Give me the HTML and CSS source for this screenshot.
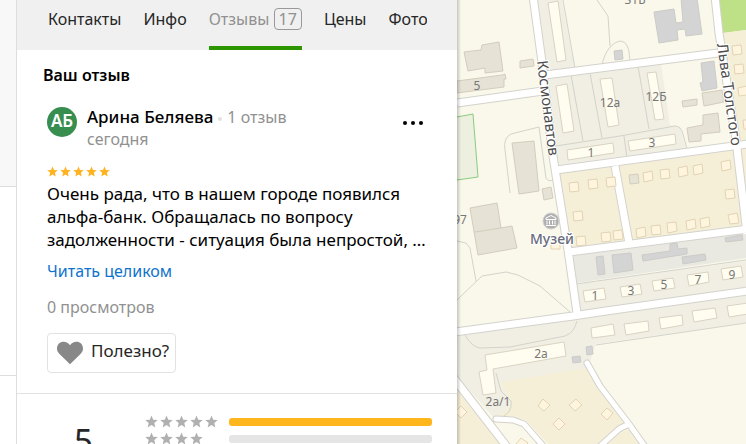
FILE: index.html
```
<!DOCTYPE html>
<html lang="ru">
<head>
  <meta charset="UTF-8">
  <meta name="viewport" content="width=device-width, initial-scale=1.0">
  <title>Отзывы</title>
  <link rel="stylesheet" href="styles.css">
</head>
<body>
  <svg class="defs" aria-hidden="true">
    <symbol id="star" viewBox="0 0 14 14">
      <path d="M7 .6 8.9 5.1 13.7 5.5 10 8.7 11.1 13.4 7 10.9 2.9 13.4 4 8.7 .3 5.5 5.1 5.1Z"/>
    </symbol>
  </svg>
  <div class="page">
    <!-- edge of the search results behind the card -->
    <div class="results">
      <div class="result resultFirst"></div>
      <div class="result resultSecond"></div>
    </div>

    <main class="card">
      <nav class="tabs">
        <a class="tab" href="#">Контакты</a>
        <a class="tab" href="#">Инфо</a>
        <a class="tab active" href="#">Отзывы <span class="count">17</span></a>
        <a class="tab" href="#">Цены</a>
        <a class="tab" href="#">Фото</a>
      </nav>

      <section class="review">
        <h2 class="title">Ваш отзыв</h2>
        <div class="content">
          <div class="author">
            <div class="avatar">АБ</div>
            <div class="who">
              <div><span class="name">Арина Беляева</span><span class="dot"></span><span class="muted">1 отзыв</span></div>
              <div class="muted">сегодня</div>
            </div>
            <button class="more" aria-label="Ещё">
              <svg width="20" height="4"><circle cx="2" cy="2" r="2"/><circle cx="10" cy="2" r="2"/><circle cx="18" cy="2" r="2"/></svg>
            </button>
          </div>
          <div class="rating">
            <svg><use href="#star"/></svg><svg><use href="#star"/></svg><svg><use href="#star"/></svg><svg><use href="#star"/></svg><svg><use href="#star"/></svg>
          </div>
          <p class="text">Очень рада, что в нашем городе появился<br>альфа-банк. Обращалась по вопросу<br>задолженности - ситуация была непростой, …</p>
          <a class="readMore" href="#">Читать целиком</a>
          <div class="views">0 просмотров</div>
          <button class="useful">
            <svg width="26" height="24" viewBox="0 0 26 24"><path d="M13 23.3 3 13.6C.4 11 0 9.300 0 7.300 0 3.400 3 .7 6.600.7 9.200.7 11.500 1.900 13 4.200 14.500 1.900 16.800.7 19.400.7 23 .7 26 3.400 26 7.300 26 9.300 25.600 11 23 13.600Z"/></svg>
            Полезно?
          </button>
        </div>
      </section>

      <section class="summary">
        <div class="score">5</div>
        <div class="bars">
          <div class="barRow">
            <div class="stars"><svg><use href="#star"/></svg><svg><use href="#star"/></svg><svg><use href="#star"/></svg><svg><use href="#star"/></svg><svg><use href="#star"/></svg></div>
            <div class="bar"><div class="fill" style="width: 100%"></div></div>
          </div>
          <div class="barRow">
            <div class="stars"><svg><use href="#star"/></svg><svg><use href="#star"/></svg><svg><use href="#star"/></svg><svg><use href="#star"/></svg></div>
            <div class="bar"></div>
          </div>
        </div>
      </section>
    </main>

    <div class="map">
      <svg viewBox="457 0 289 444" preserveAspectRatio="xMinYMin slice">
        <!-- blocks -->
        <g class="block">
          <path d="M537 0H562L575 69 545 73Z M547 79 606 71 661 64 669 124 672 149 558 165Z M661 64 670 125 680 127 686 148 558 165Z"/>
          <path d="M575 284 746 261V287L577 312Z M457 335 573 320 746 295V323L596 344 588 368 500 383 507 394 511 404 509 411 496 420 457 376Z"/>
        </g>
        <path class="industrial" d="M570 255 746 232V258L576 283Z"/>
        <path class="park" d="M715 0H746V30L723 33Z"/>
        <path class="yard" d="M457 117 473 114 478 177 457 180Z"/>
        <g class="gardens">
          <path d="M559 173 611 167 625 242 569 249Z M619 166 735 150 745 226 631 241Z M723 33 746 30V142L738 143Z M741 149H746V190Z"/>
          <path d="M500 382 586 368 600 389 627 424 613 432 598 444H548L526 420 511 416 497 416 511 406 507 394Z M457 387 502 444H457Z M632 428 643 444H608L620 433Z"/>
        </g>
        <!-- paths -->
        <g class="path">
          <path d="M563 0 575 68M571 75 583 141M590 73 602 138M597 0 608 16 610 46M602 65C605 51 612 42 621 41 630 43 629 55 630 61M638 66 649 129M556 146 620 136 675 126Q681 126 683 134L687 149M624 136 627 158"/>
          <path d="M505 150Q503 138 511 134L539 127 546 178Q548 182 554 180M505 150 510 193M457 241 466 243 470 248 476 281M457 300 482 276 506 272 518 275 540 286 570 312M465 335Q472 347 480 348L510 347 565 336Q574 333 577 321M596 345 746 323M496 373 501 391 511 401Q513 413 500 418"/>
          <path d="M576 284 746 260"/>
        </g>
        <path class="fence" d="M457 117 473 114 478 177 457 180"/>
        <!-- roads, casing first and then the surface -->
        <g class="casing">
          <path d="M533-4 542 62 552 150 568 250 577 313M457 103 543 91M545 75 718 53M715-4 719 33 736 140 747 234M556 170 748 144M569 252 748 229M615 166 629 243M455 332 573 316 606 311 748 291M453 377 508 448"/>
          <path class="lane" d="M496 419 513 420 524 424 545 448M587 363 600 386 629 424 646 448M629 424 619 429 598 448"/>
        </g>
        <g class="road">
          <path d="M533-4 542 62 552 150 568 250 577 313M457 103 543 91M545 75 718 53M715-4 719 33 736 140 747 234M556 170 748 144M569 252 748 229M615 166 629 243M455 332 573 316 606 311 748 291M453 377 508 448"/>
          <path class="lane" d="M496 419 513 420 524 424 545 448M587 363 600 386 629 424 646 448M629 424 619 429 598 448"/>
        </g>
        <!-- buildings -->
        <g class="building">
          <path d="M464 52 481 50 482 45 499 42 503 71 485 73 485 68 468 71Z M457 81 502 75 505 74 506 79 504 79 504 87 457 93Z M520 61 533 59 534 66 520 68Z"/>
          <path d="M512 143 534 141 539 191 519 194Z M542 189 551 187 553 198 544 200Z M470 208 497 203 501 228 512 226 517 248 478 255Z M475 232 501 228"/>
          <path d="M682 101 697 99V105L683 107Z M702 93 722 90 724 102 704 106Z M687 128 703 125 703 115 718 113 720 132 701 134 701 141 689 142Z M629 175 638 174 639 183 630 184Z"/>
        </g>
        <g class="grayBuilding">
          <path d="M654 12 674 9 676 23 683 22 681-2 697-2 702 34 686 36 685 29 677 30 678 40 659 43Z M701 63 714 61 717 88 702 91 700 83 703 82Z M614 51 622 50 623 59 615 60Z"/>
          <path d="M596 257 603 256 605 274 598 275Z M612 255 631 253 633 270 614 273Z M642 255 670 251 670 244 677 243 678 249 687 248 687 254 643 261Z M682 257 705 254 706 260 683 264Z M725 238 742 235 743 240 726 242Z"/>
          <path d="M572 357 580 356 581 362 573 363Z M586 347 592 346 593 354 587 355Z"/>
        </g>
        <g class="house">
          <path d="M548 3 558 1 566 60 557 62Z M556 86 567 84 574 131 563 133Z M600 79 612 78 619 125 608 127Z M647 73 656 72 664 119 655 120Z"/>
          <path d="M567 150 613 143 614 153 568 160Z M628 141 675 134 676 144 630 151Z"/>
          <path d="M583 291 604 288 606 299 585 302Z M620 287 640 284 642 294 622 297Z M652 281 673 278 675 288 654 291Z M687 275 708 272 709 282 689 286Z M721 269 741 266 743 277 723 280Z"/>
          <path d="M591 328 613 324 615 335 592 338Z M624 324 648 321 649 331 626 335Z M659 318 682 315 683 325 661 329Z M692 311 715 308 717 318 694 322Z M727 306 748 303V314L729 317Z"/>
          <path d="M485 355 564 342 566 356 493 369 496 393 483 395 479 372 487 370Z"/>
        </g>
        <g class="cottage">
          <path d="M569 183 578 182 579 191 570 192Z M588 180 597 179 598 188 589 189Z M606 178 615 177 616 186 607 187Z M573 212 582 211 583 220 574 221Z M576 237 585 236 586 245 577 246Z M601 233 610 232 611 241 602 242Z M613 231 622 230 623 239 614 240Z M551 240 560 239 560 249 551 249Z"/>
          <path d="M643 173 652 171 653 180 644 182Z M660 170 669 169 670 178 661 179Z M678 168 687 166 688 175 679 177Z M693 166 702 164 703 173 694 175Z M721 162 730 160 731 169 722 171Z M725 190 734 189 735 198 726 199Z M728 215 737 213 739 223 730 224Z"/>
          <path d="M636 229 645 227 646 236 637 238Z M651 226 660 225 661 234 652 235Z M667 223 676 222 677 231 668 233Z M686 221 695 219 696 228 687 230Z M700 219 709 217 710 226 701 228Z"/>
          <path d="M732 46 741 45 742 54 733 55Z M734 65 743 64 744 73 735 74Z M738 88 747 86V95L739 96Z M743 120H748V129H744Z"/>
          <path d="M543 399 550 405 544 411 538 406Z M576 399 582 405 575 411 569 405Z M559 418 565 424 559 430 553 424Z M607 408 613 413 607 420 601 414Z M461 406 467 412 461 418 455 412Z M521 438 528 443 522 449 516 444Z"/>
        </g>
        <!-- museum pin -->
        <circle class="pin" cx="551" cy="221" r="8"/>
        <path class="pinIcon" d="M546 219.500V218L551 215.500 556 218V219.500ZM547 220.500V224.500M549.500 220.500V224.500M552.500 220.500V224.500M555 220.500V224.500M546 225.500H556"/>
        <!-- labels -->
        <g class="number">
          <text x="477" y="90">5</text>
          <text x="635" y="4">31Б</text>
          <text x="610" y="107">12а</text>
          <text x="656" y="101">12Б</text>
          <text x="591" y="157">1</text>
          <text x="652" y="147">3</text>
          <text x="460" y="224">97</text>
          <text x="595" y="300">1</text>
          <text x="631" y="295">3</text>
          <text x="664" y="289">5</text>
          <text x="698" y="284">7</text>
          <text x="732" y="279">9</text>
          <text x="541" y="358">2а</text>
          <text x="498" y="406">2а/1</text>
        </g>
        <text class="place" x="552" y="244">Музей</text>
        <text class="street" transform="translate(537 61) rotate(83)">Космонавтов</text>
        <text class="street" transform="translate(717 44) rotate(82)">Льва Толстого</text>
      </svg>
    </div>
  </div>
</body>
</html>
```
FILE: styles.css
```
*{
  box-sizing: border-box;
}
body{
  margin: 0;
  font-family: "Noto Sans", sans-serif;
  font-size: 16px;
  line-height: 22px;
  color: #000;
}
a{
  text-decoration: none;
}
button{
  font: inherit;
  background: none;
  border: none;
  padding: 0;
}
.defs{
  display: none;
}
.page{
  display: flex;
  height: 100vh;
  overflow: hidden;
}

/* results */
.results{
  width: 17px;
  flex: none;
  border-right: 1px solid #dedede;
}
.result{
  border-bottom: 1px solid #dedede;
}
.resultFirst{
  height: 187px;
  background-color: #f8f8f8;
}
.resultSecond{
  height: 189px;
}

/* card */
.card{
  width: 440px;
  flex: none;
}
.tabs{
  display: flex;
  gap: 22px;
  height: 50px;
  padding-left: 31px;
  border-right: 30px solid #f0f0f0;
  background-color: #f0f0f0;
  overflow: hidden;
}
.tab{
  flex: none;
  padding-top: 8px;
  color: #262626;
}
.active{
  color: #919191;
  border-bottom: 4px solid #2b9600;
}
.count{
  display: inline-block;
  line-height: 20px;
  padding: 0 4px;
  border: 1px solid #999;
  border-radius: 4px;
}
.review{
  padding: 14px 30px 20px 26px;
  border-bottom: 1px solid #e2e2e2;
}
.title{
  margin: 0;
  font-size: 16px;
  font-weight: 600;
}
.content{
  padding: 20px 4px 0;
}
.author{
  display: flex;
  gap: 10px;
}
.avatar{
  width: 30px;
  height: 30px;
  margin-top: 1px;
  border-radius: 50%;
  background-color: #388e4f;
  color: #fff;
  font-size: 17px;
  font-weight: 600;
  line-height: 28px;
  text-align: center;
}
.who{
  flex: 1;
}
.name{
  font-size: 17px;
  font-weight: 500;
}
.dot{
  display: inline-block;
  width: 4px;
  height: 4px;
  margin: 0 5px;
  border-radius: 50%;
  background-color: #e2e2e2;
  vertical-align: middle;
}
.muted{
  color: #919191;
}
.more{
  display: flex;
  align-items: center;
  height: 34px;
}
.rating{
  display: flex;
  gap: 2px;
  padding: 16px 0 5px;
}
.rating svg{
  width: 11px;
  height: 11px;
  fill: #ffb31f;
}
.text{
  margin: 0;
  font-size: 17px;
  line-height: 23px;
  white-space: nowrap;
}
.readMore{
  display: block;
  margin-top: 9px;
  color: #0f73cc;
}
.views{
  margin-top: 14px;
  color: #919191;
}
.useful{
  display: flex;
  align-items: center;
  gap: 8px;
  height: 40px;
  margin-top: 15px;
  padding: 0 6px 4px 9px;
  border: 1px solid #e2e2e2;
  border-radius: 4px;
  font-size: 17px;
  color: #262626;
}
.useful svg{
  margin-top: 4px;
  fill: #888;
}
.summary{
  display: flex;
  padding: 19px 25px 0 57px;
}
.score{
  width: 71px;
  padding-top: 10px;
  font-size: 33px;
  line-height: 36px;
  color: #262626;
}
.bars{
  flex: 1;
}
.barRow{
  display: flex;
  align-items: center;
  height: 17px;
}
.stars{
  display: flex;
  gap: 2px;
  width: 84px;
}
.stars svg{
  width: 13px;
  height: 13px;
  fill: #b0b0b0;
}
.bar{
  flex: 1;
  height: 8px;
  border-radius: 3px;
  background-color: #e5e5e5;
  overflow: hidden;
}
.fill{
  height: 8px;
  background-color: #ffb61d;
}

/* map */
.map{
  flex: 1;
  position: relative;
  overflow: hidden;
  background-color: #faf8ea;
}
.map::before{
  content: "";
  position: absolute;
  top: 0;
  bottom: 0;
  left: 0;
  width: 4px;
  background: linear-gradient(to right, rgba(0, 0, 0, 0.2), rgba(0, 0, 0, 0));
}
.map svg{
  display: block;
  width: 100%;
  height: 100%;
}
.block{
  fill: #f1efe3;
}
.industrial{
  fill: #e9e8e1;
}
.park{
  fill: #bee087;
}
.yard{
  fill: #eef0df;
}
.gardens{
  fill: #f5efd8;
}
.path{
  fill: none;
  stroke: #d3d3cb;
}
.fence{
  fill: none;
  stroke: #87cc80;
}
.casing{
  fill: none;
  stroke: #d3d2cc;
  stroke-width: 9px;
  stroke-linejoin: round;
}
.road{
  fill: none;
  stroke: #fff;
  stroke-width: 7px;
  stroke-linejoin: round;
}
.lane{
  stroke-linecap: round;
}
.casing .lane{
  stroke-width: 7px;
}
.road .lane{
  stroke-width: 5px;
}
.building{
  fill: #e6e2d5;
  stroke: #d3cdbc;
}
.grayBuilding{
  fill: #d4d4d4;
  stroke: #cbcbc8;
}
.house{
  fill: #fffdf0;
  stroke: #d9d3c2;
}
.cottage{
  fill: #fff5df;
  stroke: #e2d3b4;
}
.pin{
  fill: #b0b0b2;
  stroke: #d0d0d0;
}
.pinIcon{
  fill: none;
  stroke: #fff;
}
.number{
  font-size: 12px;
  text-anchor: middle;
  fill: #777;
}
.place{
  font-size: 14px;
  font-weight: 500;
  text-anchor: middle;
  fill: #686b7c;
  stroke: #fff;
  stroke-width: 2px;
  paint-order: stroke;
}
.street{
  font-size: 15px;
  fill: #4d4d4d;
  stroke: #fff;
  stroke-width: 2px;
  paint-order: stroke;
}
```
